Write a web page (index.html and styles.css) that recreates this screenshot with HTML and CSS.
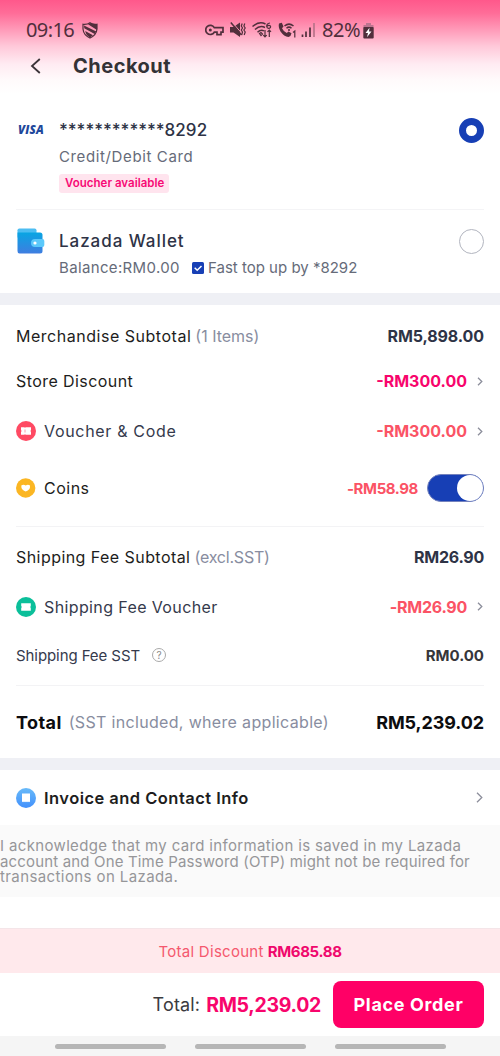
FILE: index.html
```html
<!DOCTYPE html>
<html lang="en">
<head>
<meta charset="utf-8">
<title>Checkout</title>
<link rel="stylesheet" href="styles.css">
</head>
<body>
<div class="screen">
  <header class="header">
    <div class="status">
      <span class="clock">09:16</span>
      <svg class="shield" width="16" height="17" viewBox="0 0 16 17"><path d="M1 2.300Q5 2.800 8 .8Q11 2.800 15 2.300V7Q14.500 13 8 16Q1.500 13 1 7Z" fill="none" stroke="#512f3c" stroke-width="1.200"/><path d="M6 2.300L8 1L15 2.500V8ZM2 3.500L14.300 9.500L12.600 12L2.300 6.300ZM3.200 9L11 13.200L8 15.500Q4 13.500 3.200 9Z" fill="#512f3c"/></svg>
      <div class="indicators">
        <svg width="19" height="12" viewBox="0 0 19 12"><path d="M9.300 3.600A4.600 4.600 0 1 0 9.300 8.200H12V10.600H16V8.200H18V3.600Z" fill="none" stroke="#512f3c" stroke-width="1.700"/><circle cx="5.300" cy="5.900" r="1.500" fill="#512f3c"/></svg>
        <svg width="16" height="16" viewBox="0 0 16 16"><path d="M0 5H3.500L10 .5V15L3.500 10.500H0Z" fill="#512f3c"/><path d="M2.400 .5L11.500 11" stroke="#f898b4" stroke-width="1"/><path d="M.8 .5L11.500 13" stroke="#512f3c" stroke-width="1.500"/><path d="M12.200 1.500L11.300 4L12.500 6L11.300 8L12.500 10L11.700 13M14.800 1.500L13.900 4L15.200 6L13.900 8L15.200 10L14.200 13" fill="none" stroke="#512f3c" stroke-width="1.200"/></svg>
        <svg width="20" height="16" viewBox="0 0 20 16"><path d="M.5 4.500Q7-1.200 13.500 2M3 7.500Q8 2.800 13 5.500M5.500 10.200Q9 7 12 9" fill="none" stroke="#512f3c" stroke-width="1.500"/><path d="M7.500 11.500L9 10.500L10.500 12L9 13.500ZM18 1Q14.500 1.500 14.700 4.500Q15 6.500 17 6.300Q19 6 18.500 4.200Q17 2.500 15 4.300M13 8V15M11.300 13.200L13 15L14.700 13.200M17.300 15V8M15.500 9.800L17.300 8L19 9.800" fill="none" stroke="#512f3c" stroke-width="1.200"/></svg>
        <svg width="19" height="16" viewBox="0 0 19 16"><path d="M1 1.500L3.800 .8L5.500 4.500L4 6.200Q5.500 9.500 8.800 11L10.500 9.500L13.500 11.300Q13 14.500 10.500 15Q6 14.500 2.500 9.500Q0 5 1 1.500Z" fill="#512f3c"/><path d="M6.500 4Q11 .2 15.500 4M8.500 6.200Q11 4 13.500 6.200" fill="none" stroke="#512f3c" stroke-width="1.500"/><circle cx="11" cy="8" r="1" fill="#512f3c"/><path d="M15 10.500L16.800 9V15.500" fill="none" stroke="#512f3c" stroke-width="1.200"/></svg>
        <svg class="bars" width="15" height="16" viewBox="0 0 15 16"><path d="M1.500 12.500V15M5 9.500V15M9 5.500V15" stroke="#512f3c" stroke-width="1.700"/><path d="M13 1V15" stroke="#b97389" stroke-width="1.700"/></svg>
        <span class="percent">82%</span>
        <svg class="battery" width="11" height="17" viewBox="0 0 11 17"><path d="M3 1H8V3H10.500V6H.5V3H3Z" fill="#bd7590"/><rect x=".3" y="5" width="10.400" height="11.500" rx="1" fill="#512f3c"/><path d="M6.500 5.800L2.500 11H5L4 15.200L8.500 9.600H6Z" fill="#fff"/></svg>
      </div>
    </div>
    <div class="titlebar">
      <svg class="back" width="12" height="16" viewBox="0 0 12 16"><path d="M9.800 1L2 8L9.800 15" fill="none" stroke="#3b3338" stroke-width="1.800"/></svg>
      <h1 class="title">Checkout</h1>
    </div>
  </header>

  <main>
    <section class="payments">
      <div class="method card">
        <div class="logo visa">VISA</div>
        <div class="details">
          <div class="name digits"><span class="stars">************</span>8292</div>
          <div class="sub kind">Credit/Debit Card</div>
          <span class="tag">Voucher available</span>
        </div>
        <span class="radio selected"></span>
      </div>
      <div class="method wallet">
        <div class="logo"><svg class="wallet-icon" width="28" height="26" viewBox="0 0 28 26"><defs><linearGradient id="wg" x2="0" y2="1"><stop offset="0" stop-color="#08a5e3"/><stop offset="1" stop-color="#3f7de0"/></linearGradient></defs><rect x=".5" y=".5" width="19" height="10" rx="1.800" fill="#4dbdf2"/><path d="M.5 4.500H23Q25.500 4.500 25.500 7V23Q25.500 25.500 23 25.500H2.500Q.5 25.500 .5 23Z" fill="url(#wg)"/><path d="M18 11H25.500Q27.300 11 27.300 13V17Q27.300 19 25.500 19H18A4 4 0 0 1 18 11Z" fill="#5bc9fb"/><circle cx="18" cy="15" r="1.600" fill="#fff"/></svg></div>
        <div class="details">
          <div class="name wallet-name">Lazada Wallet</div>
          <div class="sub balance"><span class="amount0">Balance:RM0.00</span><svg class="check" width="12" height="12" viewBox="0 0 12 12"><rect width="12" height="12" rx="1.500" fill="#173fb5"/><path d="M2.700 5.700L5.200 8.200L9.500 4" fill="none" stroke="#fff" stroke-width="1.500"/></svg><span class="topup">Fast top up by *8292</span></div>
        </div>
        <span class="radio"></span>
      </div>
    </section>

    <section class="summary">
      <div class="row merch"><span class="label l-merch">Merchandise Subtotal</span><span class="note items">(1 Items)</span><b class="value navy v-merch">RM5,898.00</b></div>
      <div class="row store"><span class="label l-store">Store Discount</span><b class="value pink">-RM300.00</b><svg class="chev" width="6" height="9" viewBox="0 0 6 9"><path d="M1 .7L4.800 4.500L1 8.300" /></svg></div>
      <div class="row voucher"><svg class="badge" width="20" height="20" viewBox="0 0 20 20"><circle cx="10" cy="10" r="10" fill="#ff4a63"/><path d="M5 6.200H8.500L9 7L9.500 6.200H15V8.700Q14 10 15 11.300V13.800H9.500L9 13L8.500 13.800H5V11.300Q6 10 5 8.700Z" fill="#fff"/><path d="M9 8.500V11.500" stroke="#ff9cab"/></svg><span class="label slate l-code">Voucher &amp; Code</span><b class="value coral">-RM300.00</b><svg class="chev" width="6" height="9" viewBox="0 0 6 9"><path d="M1 .7L4.800 4.500L1 8.300" /></svg></div>
      <div class="row coins"><svg class="badge" width="20" height="20" viewBox="0 0 20 20"><circle cx="9.700" cy="10" r="9.700" fill="#fbb623"/><path d="M5.300 7.500Q7.500 6 9.700 7.500Q12 6 14 7.500Q14.500 12 9.700 13.500Q5 12 5.300 7.500Z" fill="#fff"/></svg><span class="label l-coins">Coins</span><b class="value coral small">-RM58.98</b><span class="toggle"><span class="knob"></span></span></div>
      <hr class="rule">
      <div class="row shipping"><span class="label l-ship">Shipping Fee Subtotal</span><span class="note excl">(excl.SST)</span><b class="value navy v-ship">RM26.90</b></div>
      <div class="row shipvoucher"><svg class="badge" width="20" height="20" viewBox="0 0 20 20"><circle cx="10" cy="10" r="10" fill="#0bbf9a"/><path d="M5.200 6.200H14.800V8.700Q13.800 10 14.800 11.300V13.800H5.200V11.300Q6.200 10 5.200 8.700Z" fill="#fff"/></svg><span class="label slate l-sv">Shipping Fee Voucher</span><b class="value coral v-sv">-RM26.90</b><svg class="chev" width="6" height="9" viewBox="0 0 6 9"><path d="M1 .7L4.800 4.500L1 8.300" /></svg></div>
      <div class="row sst"><span class="label slate l-sst">Shipping Fee SST</span><span class="help">?</span><b class="value gray v-sst">RM0.00</b></div>
      <hr class="rule bottom">
      <div class="row total"><b class="total-label">Total</b><span class="note included">(SST included, where applicable)</span><b class="value v-total">RM5,239.02</b></div>
    </section>

    <section class="invoice">
      <svg class="badge" width="20" height="20" viewBox="0 0 20 20"><defs><linearGradient id="ig" x2="0" y2="1"><stop offset="0" stop-color="#68baf9"/><stop offset="1" stop-color="#4290fc"/></linearGradient></defs><circle cx="10" cy="10" r="10" fill="url(#ig)"/><path d="M6 5.500H14V14.300L13 13.600L12 14.300L11 13.600L10 14.300L9 13.600L8 14.300L7 13.600L6 14.300Z" fill="#fff"/></svg>
      <span class="invoice-label">Invoice and Contact Info</span>
      <svg class="chev big" width="7" height="11" viewBox="0 0 7 11"><path d="M1 .8L5.800 5.500L1 10.200"/></svg>
    </section>
    <p class="ack"><span class="a1">I acknowledge that my card information is saved in my Lazada</span><br><span class="a2">account and One Time Password (OTP) might not be required for</span><br><span class="a3">transactions on Lazada.</span></p>
  </main>

  <footer>
    <div class="discount"><span class="d-label">Total Discount</span><b class="d-value">RM685.88</b></div>
    <div class="order"><span class="o-label">Total:</span><b class="o-value">RM5,239.02</b><button class="place">Place Order</button></div>
    <div class="nav"><i></i><i></i><i></i></div>
  </footer>
</div>
</body>
</html>
```
FILE: styles.css
```css
* { box-sizing: border-box; }
body { margin: 0; background: #fff; font-family: Inter, "Liberation Sans", sans-serif; }
.screen { width: 500px; height: 1056px; display: flex; flex-direction: column; overflow: hidden; white-space: nowrap; color: #1d1d20; }
.header { height: 96px; background: linear-gradient(#ff588b 0, #ff6c98 13px, #ff9bb9 30px, #ffc8d9 46px, #ffebf2 64px, #fffafb 80px, #fff 94px); }
.status { height: 47px; padding: 14px 0 1px 26px; display: flex; align-items: center; color: #512f3c; }
.clock { width: 48px; font: 20px/30px "Noto Sans", sans-serif; letter-spacing: -0.6px; }
.shield { margin-left: 8px; }
.indicators { margin-left: 107px; display: flex; align-items: center; gap: 6px; }
.bars { margin-left: -2px; }
.percent { width: 40px; font: 20px/30px "Noto Sans", sans-serif; letter-spacing: -0.4px; }
.battery { margin-left: -5px; }
.titlebar { display: flex; align-items: center; height: 38px; padding-left: 30px; }
.title { margin: 0 0 0 31px; font-size: 20px; font-weight: 700; letter-spacing: .5px; color: #343236; }

.method { display: flex; align-items: flex-start; margin: 0 16px; }
.card { height: 114px; border-bottom: 1px solid #f4f4f6; padding-top: 22px; }
.wallet { height: 83px; padding-top: 18px; }
.logo { width: 43px; padding-left: 1px; flex: none; }
.wallet-icon { display: block; }
.visa { padding: 5px 0 0 2px; font: italic 800 11.5px/14px "Open Sans", sans-serif; letter-spacing: .2px; color: #1f489b; }
.details { flex: 1; }
.name { font-size: 17px; font-weight: 500; line-height: 24px; color: #2e3346; }
.digits { letter-spacing: .05px; }
.stars { letter-spacing: -.05px; }
.wallet-name { padding-top: 1px; letter-spacing: .95px; }
.sub { font-size: 15px; line-height: 20px; color: #666b79; }
.kind { margin-top: 5px; letter-spacing: .62px; }
.tag { display: inline-block; margin-top: 7px; width: 110px; padding: 0 0 0 6px; height: 19px; line-height: 19px; border-radius: 3px; background: #ffe4ee; color: #f70a75; font-size: 11.5px; font-weight: 600; letter-spacing: .02px; }
.balance { margin-top: 5px; display: flex; align-items: center; }
.amount0 { width: 133px; letter-spacing: .35px; }
.topup { margin-left: 4px; }
.radio { width: 25px; height: 25px; border: 1px solid #b2b5bf; border-radius: 50%; margin-top: 1px; }
.selected { border: 7.500px solid #173fb5; margin-top: 0; }

.summary { border-top: 12px solid #eff0f5; border-bottom: 12px solid #eff0f5; padding: 0 16px; height: 477px; }
.row { display: flex; align-items: center; }
.label { font-size: 16px; }
.l-merch { letter-spacing: .52px; }
.l-store { letter-spacing: .42px; }
.l-code { letter-spacing: .68px; }
.l-coins { letter-spacing: .5px; }
.l-ship { letter-spacing: .44px; }
.l-sv { letter-spacing: .38px; }
.slate { color: #353a4c; }
.note { font-size: 16px; color: #888da0; margin-left: 4px; }
.value { margin-left: auto; font-size: 16px; font-weight: 700; }
.v-merch { letter-spacing: -.1px; }
.v-ship, .v-sv { letter-spacing: -.25px; }
.navy { color: #2e3346; }
.pink { color: #f8056c; }
.coral { color: #fb5365; }
.gray { color: #36363a; }
.small { font-size: 15px; letter-spacing: -.4px; }
.badge { flex: none; margin-right: 8px; }
.chev { margin: 0 1px 0 10px; fill: none; stroke: #8c8e9b; stroke-width: 1.3; }
.merch { height: 62px; }
.store { height: 28px; }
.voucher { height: 72px; }
.coins { height: 42px; }
.rule { margin: 17px 0 0; border: 0; height: 1px; background: #f3f3f5; }
.rule.bottom { margin: 0; }
.shipping { height: 60px; }
.shipvoucher { height: 39px; }
.sst { height: 58px; margin-bottom: 1px; }
.total { height: 72px; }
.excl { letter-spacing: -.2px; }
.toggle { width: 57px; height: 28px; margin-left: 9px; border-radius: 14px; background: #173fb5; border: 1px solid #7482bd; display: flex; justify-content: flex-end; }
.knob { width: 26px; height: 26px; border-radius: 50%; background: #fff; }
.help { width: 14px; height: 14px; margin-left: 12px; border: 1px solid #aaa; border-radius: 50%; font-size: 10px; line-height: 12px; text-align: center; color: #888; }
.l-sst { font-size: 15px; letter-spacing: -.08px; }
.v-sst { font-size: 15px; }
.total-label { font-size: 18px; letter-spacing: .4px; color: #0c0c0e; }
.included { margin-left: 7px; letter-spacing: .33px; }
.v-total { font-size: 18px; letter-spacing: -.1px; color: #0c0c0e; }

.invoice { height: 55px; padding: 0 16px; display: flex; align-items: center; }
.invoice-label { font-size: 16.5px; font-weight: 600; letter-spacing: .46px; }
.invoice .chev { margin-left: auto; }
.ack { margin: 0; height: 72px; padding-top: 13px; background: #fafafa; color: #969699; font-size: 15px; line-height: 15.7px; }
.a1 { letter-spacing: .35px; }
.a2 { letter-spacing: .16px; }
.a3 { letter-spacing: .4px; }
footer { margin-top: auto; }
.discount { height: 45px; padding-top: 1px; border-top: 1px solid #f4e5e8; background: #ffe9ec; display: flex; align-items: center; justify-content: center; gap: 4px; font-size: 15px; }
.d-label { color: #f5586e; letter-spacing: .28px; }
.d-value { color: #ef086d; letter-spacing: -.35px; }
.order { height: 63px; padding-right: 16px; display: flex; align-items: center; justify-content: flex-end; }
.o-label { font-size: 18px; color: #3b3b3e; margin-right: 6px; letter-spacing: .15px; }
.o-value { font-size: 19.5px; letter-spacing: -.3px; color: #f8056c; margin-right: 12px; }
.place { width: 151px; height: 47px; border: 0; border-radius: 8px; padding: 0; background: #ff0066; color: #fff; font: 700 18px Inter, sans-serif; letter-spacing: .65px; }
.nav { height: 20px; background: #f5f5f5; display: flex; justify-content: center; align-items: center; gap: 29px; }
.nav i { width: 111px; height: 5px; border-radius: 3px; background: #b6b6b6; }
```
